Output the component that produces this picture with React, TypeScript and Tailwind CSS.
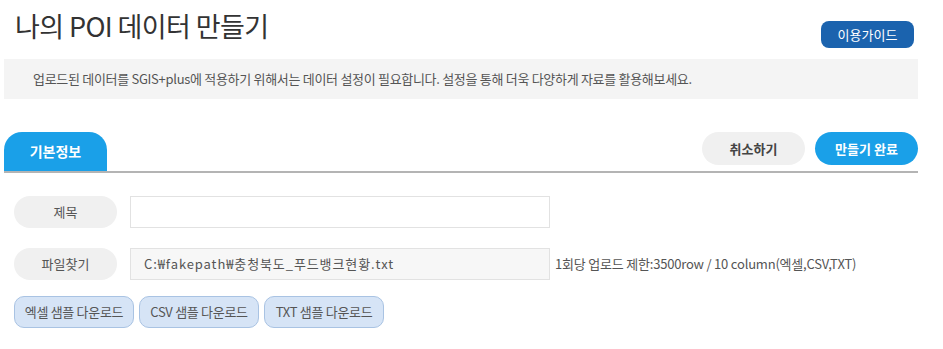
import React from "react";

const font = { fontFamily: '"Noto Sans CJK KR", "Noto Sans", sans-serif' };

export default function App() {
  return (
    <div className="w-[943px] h-[349px] bg-white text-[#333]" style={font}>
      <div className="w-[914px] ml-[4px]">
        <div className="flex items-start justify-between h-[59px]">
          <h1 className="ml-[11px] mt-[8px] text-[27px] leading-[36px] text-[#333] font-normal tracking-[-0.6px]">
            나의 POI 데이터 만들기
          </h1>
          <button className="mt-[21px] mr-[4px] w-[93px] h-[27px] rounded-[8px] bg-[#1b63ae] text-white text-[13px] leading-none">
            이용가이드
          </button>
        </div>
        <div className="h-[40px] bg-[#f4f4f4] flex items-center pl-[29px] text-[13px] text-[#555] tracking-[-0.3px]">
          업로드된 데이터를 SGIS+plus에 적용하기 위해서는 데이터 설정이 필요합니다. 설정을 통해 더욱 다양하게 자료를 활용해보세요.
        </div>
        <div className="mt-[33px] flex items-end justify-between border-b-2 border-[#b4b4b4] h-[41px]">
          <div className="w-[103px] h-[39px] bg-[#1aa0e8] rounded-t-[18px] flex items-center justify-center text-white text-[14px] font-bold">
            기본정보
          </div>
          <div className="flex gap-[10px] self-start">
            <button className="w-[103px] h-[33px] rounded-full bg-[#f0f0f0] text-[#444] text-[13px] font-bold">
              취소하기
            </button>
            <button className="w-[103px] h-[33px] rounded-full bg-[#1aa0e8] text-white text-[13px] font-bold">
              만들기 완료
            </button>
          </div>
        </div>
        <div className="mt-[23px] pl-[10px] flex flex-col gap-[20px]">
          <div className="flex items-center">
            <div className="w-[103px] h-[32px] rounded-full bg-[#f0f0f0] flex items-center justify-center text-[13px] text-[#555]">
              제목
            </div>
            <div className="ml-[13px] w-[420px] h-[32px] border border-[#e2e2e2] bg-white"></div>
          </div>
          <div className="flex items-center">
            <div className="w-[103px] h-[32px] rounded-full bg-[#f0f0f0] flex items-center justify-center text-[13px] text-[#555]">
              파일찾기
            </div>
            <div className="ml-[13px] w-[420px] h-[32px] border border-[#e2e2e2] bg-[#f7f7f7] flex items-center pl-[13px] text-[13px] text-[#555] tracking-[0.9px]">
              C:₩fakepath₩충청북도_푸드뱅크현황.txt
            </div>
            <div className="ml-[5px] text-[13px] text-[#555] tracking-[-0.2px]">
              1회당 업로드 제한:3500row / 10 column(엑셀,CSV,TXT)
            </div>
          </div>
        </div>
        <div className="mt-[16px] pl-[10px] flex gap-[5px]">
          {["엑셀 샘플 다운로드", "CSV 샘플 다운로드", "TXT 샘플 다운로드"].map((t) => (
            <button
              key={t}
              className="w-[120px] h-[32px] rounded-[10px] bg-[#d6e4f6] border border-[#a9c3e3] text-[13px] text-[#555] tracking-[-0.3px]"
            >
              {t}
            </button>
          ))}
        </div>
      </div>
    </div>
  );
}
